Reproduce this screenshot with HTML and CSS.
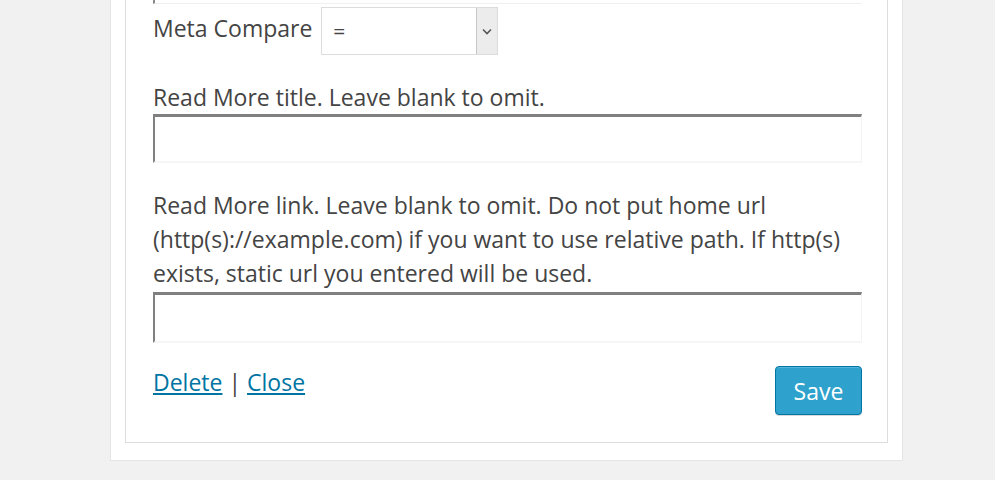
FILE: index.html
```html
<!DOCTYPE html>
<html>
<head>
<meta charset="utf-8">
<link rel="stylesheet" href="styles.css">
</head>
<body>
<div class="outer">
  <div class="inner">
    <div class="prev-input"></div>
    <div class="compare-row">
      <span class="label">Meta Compare</span>
      <div class="select">
        <span class="select-value">=</span>
        <span class="select-arrow">
          <svg width="10" height="7" viewBox="0 0 10 7"><path d="M1 1.5 L5 5.5 L9 1.5" fill="none" stroke="#555" stroke-width="1.6"/></svg>
        </span>
      </div>
    </div>
    <label class="field-label first">Read More title. Leave blank to omit.</label>
    <div class="text-input"></div>
    <label class="field-label second">Read More link. Leave blank to omit. Do not put home url (http(s)://example.com) if you want to use relative path. If http(s) exists, static url you entered will be used.</label>
    <div class="text-input tall"></div>
    <div class="actions">
      <div class="links"><a href="#">Delete</a> <span class="sep">|</span> <a href="#">Close</a></div>
      <button class="save">Save</button>
    </div>
  </div>
</div>
</body>
</html>
```
FILE: styles.css
```css
html, body {
  margin: 0;
  padding: 0;
  background: #f1f1f1;
  font-family: "Open Sans", "Noto Sans", sans-serif;
  color: #444;
}
.outer {
  box-sizing: border-box;
  margin-left: 110px;
  width: 793px;
  background: #fff;
  border: 1px solid #e5e5e5;
  border-top: none;
  padding: 0 14px 17px 14px;
}
.inner {
  border: 1px solid #dddddd;
  border-top: none;
  padding: 0 25px 27px 27px;
  display: flex;
  flex-direction: column;
}
.prev-input {
  height: 3px;
  border-left: 2px solid #8a8a8a;
  border-bottom: 1px solid #f0f0f0;
}
.compare-row {
  display: flex;
  align-items: center;
  margin-top: 3px;
  height: 48px;
}
.label {
  font-size: 23px;
  margin-right: 9px;
  margin-bottom: 6px;
}
.select {
  width: 175px;
  height: 46px;
  border: 1px solid #dcdcdc;
  display: flex;
  align-items: center;
  justify-content: space-between;
}
.select-value {
  font-size: 21px;
  padding-left: 11px;
}
.select-arrow {
  width: 20px;
  height: 46px;
  background: #ececec;
  border-left: 1px solid #c8c8c8;
  display: flex;
  align-items: center;
  justify-content: center;
}
.field-label {
  font-size: 23px;
  line-height: 34px;
}
.field-label.first {
  margin-top: 25px;
}
.field-label.second {
  margin-top: 25px;
  margin-bottom: 2px;
}
.text-input {
  height: 44px;
  border-top: 3px solid #808080;
  border-left: 2px solid #808080;
  border-right: 1px solid #f4f4f4;
  border-bottom: 2px solid #f6f6f6;
  background: #fff;
}
.text-input.tall {
  height: 46px;
}
.actions {
  display: flex;
  justify-content: space-between;
  align-items: flex-start;
  margin-top: 23px;
}
.links {
  font-size: 23px;
  line-height: 34px;
  margin-top: -1px;
}
.links a {
  color: #0074a2;
  text-decoration: underline;
}
.save {
  width: 87px;
  height: 49px;
  background: #2ea2cc;
  border: 1px solid #0074a2;
  border-radius: 4px;
  color: #fff;
  font-family: "Open Sans", "Noto Sans", sans-serif;
  font-size: 23px;
  padding: 0;
  box-shadow: inset 0 1px 0 rgba(120,200,230,.5), 0 1px 0 rgba(0,0,0,.15);
}
```
